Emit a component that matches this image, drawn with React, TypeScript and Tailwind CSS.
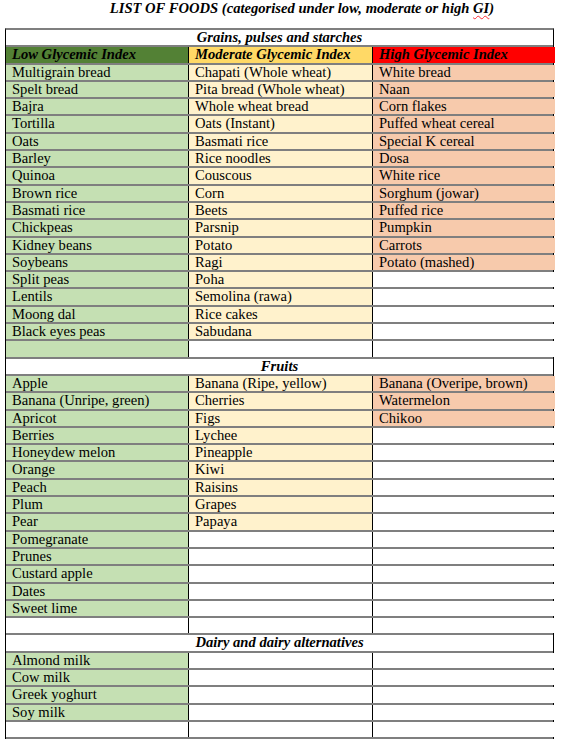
const grains: [string, string, string][] = [
  ['Multigrain bread', 'Chapati (Whole wheat)', 'White bread'],
  ['Spelt bread', 'Pita bread (Whole wheat)', 'Naan'],
  ['Bajra', 'Whole wheat bread', 'Corn flakes'],
  ['Tortilla', 'Oats (Instant)', 'Puffed wheat cereal'],
  ['Oats', 'Basmati rice', 'Special K cereal'],
  ['Barley', 'Rice noodles', 'Dosa'],
  ['Quinoa', 'Couscous', 'White rice'],
  ['Brown rice', 'Corn', 'Sorghum (jowar)'],
  ['Basmati rice', 'Beets', 'Puffed rice'],
  ['Chickpeas', 'Parsnip', 'Pumpkin'],
  ['Kidney beans', 'Potato', 'Carrots'],
  ['Soybeans', 'Ragi', 'Potato (mashed)'],
  ['Split peas', 'Poha', ''],
  ['Lentils', 'Semolina (rawa)', ''],
  ['Moong dal', 'Rice cakes', ''],
  ['Black eyes peas', 'Sabudana', ''],
];

const fruits: [string, string, string][] = [
  ['Apple', 'Banana (Ripe, yellow)', 'Banana (Overipe, brown)'],
  ['Banana (Unripe, green)', 'Cherries', 'Watermelon'],
  ['Apricot', 'Figs', 'Chikoo'],
  ['Berries', 'Lychee', ''],
  ['Honeydew melon', 'Pineapple', ''],
  ['Orange', 'Kiwi', ''],
  ['Peach', 'Raisins', ''],
  ['Plum', 'Grapes', ''],
  ['Pear', 'Papaya', ''],
  ['Pomegranate', '', ''],
  ['Prunes', '', ''],
  ['Custard apple', '', ''],
  ['Dates', '', ''],
  ['Sweet lime', '', ''],
];

const dairy: [string, string, string][] = [
  ['Almond milk', '', ''],
  ['Cow milk', '', ''],
  ['Greek yoghurt', '', ''],
  ['Soy milk', '', ''],
];

const rowCls = 'grid grid-cols-[183px_184px_182px] h-[17.3px] border-b-2 border-[#7f7f7f]';
const cellCls = 'pl-[6px] leading-[15px] whitespace-nowrap overflow-hidden';

function Row({ cells, green = false }: { cells: [string, string, string]; green?: boolean }) {
  const [a, b, c] = cells;
  return (
    <div className={rowCls}>
      <div className={`${cellCls} border-r border-black ${a || green ? 'bg-[#c5e0b3]' : 'bg-white'}`}>{a}</div>
      <div className={`${cellCls} border-r border-black ${b ? 'bg-[#fff2cc]' : 'bg-white'}`}>{b}</div>
      <div className={`${cellCls} ${c ? 'bg-[#f7caac]' : 'bg-white'}`}>{c}</div>
    </div>
  );
}

function SectionHeader({ title }: { title: string }) {
  return (
    <div className="h-[17.3px] border-b-2 border-[#7f7f7f] bg-white text-center font-bold italic leading-[15px]">
      {title}
    </div>
  );
}

export default function App() {
  return (
    <div
      className="w-[562px] h-[742px] bg-white text-black text-[14.6px]"
      style={{ fontFamily: '"Liberation Serif", "Times New Roman", serif' }}
    >
      <div className="h-[28px] pl-[42px] text-center font-bold italic leading-[17px]">
        LIST OF FOODS (categorised under low, moderate or high{' '}
        <span className="underline decoration-wavy decoration-red-500 decoration-1 underline-offset-2">GI</span>)
      </div>

      <div className="ml-[5px] w-[549px] border-l border-r border-black border-t-2 border-t-[#7f7f7f]">
        <SectionHeader title="Grains, pulses and starches" />
        <div className={`${rowCls} font-bold italic`}>
          <div className={`${cellCls} border-r border-black bg-[#538135]`}>Low Glycemic Index</div>
          <div className={`${cellCls} border-r border-black bg-[#ffd966]`}>Moderate Glycemic Index</div>
          <div className={`${cellCls} bg-[#ff0000]`}>High Glycemic Index</div>
        </div>
        {grains.map((r, i) => (
          <Row key={'g' + i} cells={r} />
        ))}
        <Row cells={['', '', '']} green />

        <SectionHeader title="Fruits" />
        {fruits.map((r, i) => (
          <Row key={'f' + i} cells={r} />
        ))}
        <Row cells={['', '', '']} />

        <SectionHeader title="Dairy and dairy alternatives" />
        {dairy.map((r, i) => (
          <Row key={'d' + i} cells={r} />
        ))}
        <Row cells={['', '', '']} />
      </div>
    </div>
  );
}
